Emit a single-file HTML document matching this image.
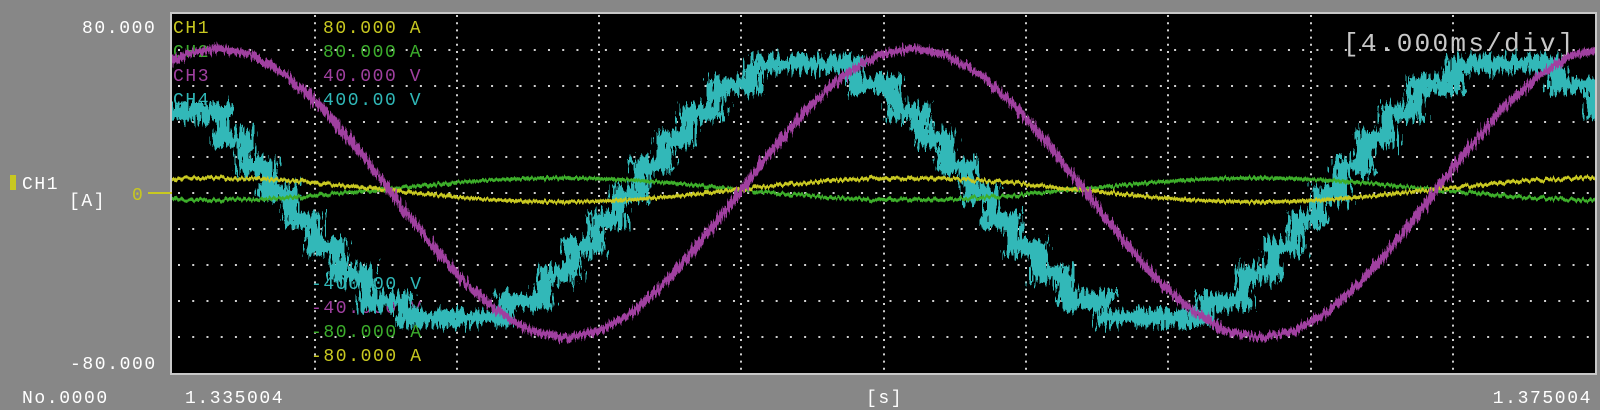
<!DOCTYPE html>
<html><head><meta charset="utf-8"><style>
html,body{margin:0;padding:0;background:#878787;}
body{width:1600px;height:410px;overflow:hidden;position:relative;}
svg{position:absolute;left:0;top:0;}
text{font-family:"Liberation Mono",monospace;}
</style></head><body>
<svg width="1600" height="410" viewBox="0 0 1600 410">
<defs>
<filter id="n" x="-5%" y="-30%" width="110%" height="160%">
<feTurbulence type="fractalNoise" baseFrequency="0.45 0.03" numOctaves="2" seed="3"/>
<feDisplacementMap in="SourceGraphic" scale="7" xChannelSelector="R" yChannelSelector="G"/>
</filter>
<filter id="nm" x="-5%" y="-30%" width="110%" height="160%">
<feTurbulence type="fractalNoise" baseFrequency="0.6 0.04" numOctaves="2" seed="5"/>
<feDisplacementMap in="SourceGraphic" scale="12" xChannelSelector="R" yChannelSelector="G"/>
</filter>
<filter id="n2" x="-5%" y="-30%" width="110%" height="160%">
<feTurbulence type="fractalNoise" baseFrequency="0.4 0.06" numOctaves="2" seed="7"/>
<feDisplacementMap in="SourceGraphic" scale="28" xChannelSelector="R" yChannelSelector="G"/>
</filter>
<clipPath id="c"><rect x="172" y="14" width="1423" height="359"/></clipPath>
</defs>
<!-- plot -->
<rect x="171" y="13" width="1425" height="361" fill="#000" stroke="#c8c8c8" stroke-width="2"/>
<g clip-path="url(#c)" stroke="#d0d0d0" stroke-width="2">
<g stroke-dasharray="2 12.23">
<line x1="178" y1="50" x2="1595" y2="50"/><line x1="178" y1="86" x2="1595" y2="86"/>
<line x1="178" y1="122" x2="1595" y2="122"/><line x1="178" y1="157" x2="1595" y2="157"/>
<line x1="178" y1="193" x2="1595" y2="193"/><line x1="178" y1="229" x2="1595" y2="229"/>
<line x1="178" y1="265" x2="1595" y2="265"/><line x1="178" y1="301" x2="1595" y2="301"/>
<line x1="178" y1="337" x2="1595" y2="337"/>
</g>
<g stroke-dasharray="2 5.2">
<line x1="315" y1="15" x2="315" y2="373"/><line x1="457" y1="15" x2="457" y2="373"/>
<line x1="599" y1="15" x2="599" y2="373"/><line x1="741" y1="15" x2="741" y2="373"/>
<line x1="884" y1="15" x2="884" y2="373"/><line x1="1026" y1="15" x2="1026" y2="373"/>
<line x1="1168" y1="15" x2="1168" y2="373"/><line x1="1311" y1="15" x2="1311" y2="373"/>
<line x1="1453" y1="15" x2="1453" y2="373"/>
</g>
</g>
<!-- labels inside -->
<g font-size="18" letter-spacing="1.6">
<text x="173" y="33" fill="#c8c820">CH1</text>
<text x="173" y="57" fill="#3cae2c">CH2</text>
<text x="173" y="81" fill="#a040a0">CH3</text>
<text x="173" y="105" fill="#30b8b8">CH4</text>
<text x="323" y="33" fill="#c8c820">80.000 A</text>
<text x="323" y="57" fill="#3cae2c">80.000 A</text>
<text x="323" y="81" fill="#a040a0">40.000 V</text>
<text x="323" y="105" fill="#30b8b8">400.00 V</text>
<text x="311" y="289" fill="#30b8b8">-400.00 V</text>
<text x="311" y="313" fill="#a040a0">-40.000 V</text>
<text x="311" y="337" fill="#3cae2c">-80.000 A</text>
<text x="311" y="361" fill="#c8c820">-80.000 A</text>
</g>
<text x="1343" y="51" font-size="26" fill="#c8c8c8" letter-spacing="2.3">[4.000ms/div]</text>
<!-- waves -->
<g clip-path="url(#c)">
<path filter="url(#n2)" fill="none" stroke="#30b8b8" stroke-width="16" transform="translate(30,0)" d="M130 112 H192 V139 H216 V166 H239 V193 H261 V220 H284 V247 H308 V274 H336 V301 H375 V318 H475 V301 H514 V274 H542 V247 H566 V220 H589 V193 H611 V166 H634 V139 H658 V112 H686 V85 H725 V64 H825 V85 H864 V112 H892 V139 H916 V166 H939 V193 H961 V220 H984 V247 H1008 V274 H1036 V301 H1075 V318 H1175 V301 H1214 V274 H1242 V247 H1266 V220 H1289 V193 H1311 V166 H1334 V139 H1358 V112 H1386 V85 H1425 V64 H1525 V85 H1564 V112 H1595"/>
<polyline filter="url(#n)" fill="none" stroke="#3cae2c" stroke-width="3.5" points="40,189 74.75,185.6 109.5,182.5 144.25,180.1 179,178.5 213.75,178 248.5,178.5 283.25,180.1 318,182.5 352.75,185.6 387.5,189 422.25,192.4 457,195.5 491.75,197.9 526.5,199.5 561.25,200 596,199.5 630.75,197.9 665.5,195.5 700.25,192.4 735,189 769.75,185.6 804.5,182.5 839.25,180.1 874,178.5 908.75,178 943.5,178.5 978.25,180.1 1013,182.5 1047.75,185.6 1082.5,189 1117.25,192.4 1152,195.5 1186.75,197.9 1221.5,199.5 1256.25,200 1291,199.5 1325.75,197.9 1360.5,195.5 1395.25,192.4 1430,189 1464.75,185.6 1499.5,182.5 1534.25,180.1 1569,178.5 1603.75,178" transform="translate(0,0) scale(1,1)" style="transform:scale(1,-1);transform-origin:0 189px"/>
<polyline filter="url(#n)" fill="none" stroke="#c8c820" stroke-width="3.5" points="40,190 74.75,186.3 109.5,182.9 144.25,180.3 179,178.6 213.75,178 248.5,178.6 283.25,180.3 318,182.9 352.75,186.3 387.5,190 422.25,193.7 457,197.1 491.75,199.7 526.5,201.4 561.25,202 596,201.4 630.75,199.7 665.5,197.1 700.25,193.7 735,190 769.75,186.3 804.5,182.9 839.25,180.3 874,178.6 908.75,178 943.5,178.6 978.25,180.3 1013,182.9 1047.75,186.3 1082.5,190 1117.25,193.7 1152,197.1 1186.75,199.7 1221.5,201.4 1256.25,202 1291,201.4 1325.75,199.7 1360.5,197.1 1395.25,193.7 1430,190 1464.75,186.3 1499.5,182.9 1534.25,180.3 1569,178.6 1603.75,178"/>
<polyline filter="url(#nm)" fill="none" stroke="#a040a0" stroke-width="7" stroke-linejoin="round" transform="translate(4,0)" points="40,193 74.75,148.2 109.5,107.7 144.25,75.7 179,55.1 213.75,48 248.5,55.1 283.25,75.7 318,107.7 352.75,148.2 387.5,193 422.25,237.8 457,278.3 491.75,310.3 526.5,330.9 561.25,338 596,330.9 630.75,310.3 665.5,278.3 700.25,237.8 735,193 769.75,148.2 804.5,107.7 839.25,75.7 874,55.1 908.75,48 943.5,55.1 978.25,75.7 1013,107.7 1047.75,148.2 1082.5,193 1117.25,237.8 1152,278.3 1186.75,310.3 1221.5,330.9 1256.25,338 1291,330.9 1325.75,310.3 1360.5,278.3 1395.25,237.8 1430,193 1464.75,148.2 1499.5,107.7 1534.25,75.7 1569,55.1 1603.75,48"/>
</g>
<!-- outside labels -->
<g font-size="18" fill="#fff" letter-spacing="1.6">
<text x="82" y="33">80.000</text>
<text x="70" y="369">-80.000</text>
<text x="22" y="189">CH1</text>
<text x="69" y="206">[A]</text>
<text x="22" y="403">No.0000</text>
<text x="185" y="403">1.335004</text>
<text x="866" y="403">[s]</text>
<text x="1592" y="403" text-anchor="end">1.375004</text>
</g>
<rect x="10" y="175" width="6" height="15" fill="#c8c820"/>
<text x="132" y="200" font-size="18" fill="#c8c820">0</text>
<line x1="148" y1="193" x2="172" y2="193" stroke="#c8c820" stroke-width="2"/>
</svg>
</body></html>
